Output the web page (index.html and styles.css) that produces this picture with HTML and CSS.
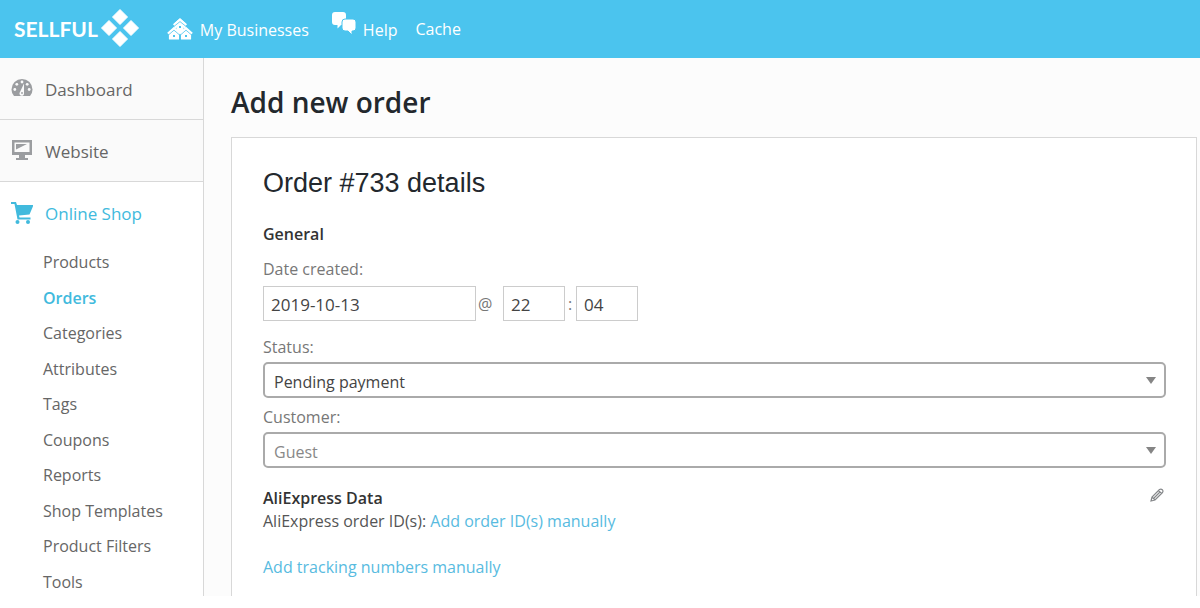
FILE: index.html
```html
<!DOCTYPE html>
<html lang="en">
<head>
<meta charset="utf-8">
<meta name="viewport" content="width=device-width, initial-scale=1">
<title>Add new order</title>
<link rel="stylesheet" href="styles.css">
</head>
<body>
<div class="page">
  <header class="topbar">
    <a class="brand" href="#">
      <span>SELLFUL</span>
      <svg class="brand-mark" viewBox="0 0 40 40" aria-hidden="true"><path d="M20 1.500 27.500 9 20 16.500 12.500 9ZM31 12.500 38.500 20 31 27.500 23.500 20ZM20 23.500 27.500 31 20 38.500 12.500 31ZM9 12.500 16.500 20 9 27.500 1.500 20Z" fill="#fff" stroke="#fff" stroke-linejoin="round"/></svg>
    </a>
    <nav class="topnav" aria-label="Account">
      <a class="businesses" href="#">
        <svg width="26" height="22" viewBox="0 0 26 22" aria-hidden="true">
          <g fill="#fff" stroke="#fff" stroke-width="1.200" stroke-linejoin="round">
            <path d="M8 5.500 13 1l5 4.500V10l-5-3.500L8 10Z"/>
            <path d="M2.500 15.500 7 11.500l4.500 4V21h-9ZM14.500 15.500l4.500-4 4.500 4V21h-9Z"/>
            <path d="M10 9.500 13 7l3 2.500V12l-3 2.500L10 12Z"/>
          </g>
          <path d="M6.500 6.800 13 1.300l6.500 5.500M.8 15.500 7 10l6 5.300 6-5.300 6.200 5.500" fill="none" stroke="#fff" stroke-width="1.700"/>
          <path d="M7.500 8 13 3.600 18.500 8M2 16.500 7 12.200l5 4.300M14 16.500l5-4.300 5 4.300" fill="none" stroke="#4bc4ee" stroke-width=".8"/>
          <path d="M12 8h2v2h-2ZM6 17h2v2H6ZM18 17h2v2h-2ZM12.600 17h.8v5h-.8Z" fill="#4bc4ee"/>
        </svg>
        <span>My Businesses</span>
      </a>
      <a class="help" href="#">
        <svg width="26" height="25" viewBox="0 0 26 25" aria-hidden="true">
          <path d="M4 1h8q3 0 3 3v7q0 3-3 3H10l-3.500 3.500V14H4Q1 14 1 11V4Q1 1 4 1Z" fill="#fff"/>
          <path d="M14 8h8q3 0 3 3v6q0 3-3 3h-1v4l-4-4h-3q-3 0-3-3v-6q0-3 3-3Z" fill="#fff" stroke="#4bc4ee"/>
        </svg>
        <span>Help</span>
      </a>
      <a class="cache" href="#">Cache</a>
    </nav>
  </header>
  <div class="body">
    <nav class="sidebar" aria-label="Main">
      <a class="section" href="#">
        <svg width="22" height="22" viewBox="0 0 22 22" aria-hidden="true">
          <path d="M3 18Q.5 15 .5 11.500a10.500 10.500 0 0 1 21 0Q21.500 15 19 18Z" fill="#9b9da0"/>
          <g fill="#fafafa"><circle cx="11" cy="4" r="1.400"/><circle cx="5.800" cy="6.300" r="1.400"/><circle cx="16.200" cy="6.300" r="1.400"/><circle cx="3.800" cy="11.500" r="1.400"/><circle cx="18.200" cy="11.500" r="1.400"/><path d="M13 5.500 9 14a2.300 2.300 0 1 0 4 1Z"/></g>
          <circle cx="11" cy="15" r=".9" fill="#9b9da0"/>
        </svg>
        <span>Dashboard</span>
      </a>
      <a class="section" href="#">
        <svg width="22" height="22" viewBox="0 0 22 22" aria-hidden="true">
          <path d="M1 0h20v15h-7v3h3v2H5v-2h3v-3H1ZM3.500 2.500v9.500h15V2.500Z" fill="#9b9da0" fill-rule="evenodd"/>
          <path d="M5 4h11L5 9.500Z" fill="#9b9da0"/>
        </svg>
        <span>Website</span>
      </a>
      <a class="section section-open" href="#">
        <svg width="22" height="22" viewBox="0 0 22 22" aria-hidden="true">
          <path d="M0 0h5l1 3h16.500l-4 9.500-10.500 1 .5 2h11v2H6.500L3.500 2H0Z" fill="#41badd"/>
          <circle cx="6.500" cy="20" r="2" fill="#41badd"/><circle cx="17" cy="20" r="2" fill="#41badd"/>
        </svg>
        <span>Online Shop</span>
      </a>
      <ul class="submenu">
        <li><a href="#">Products</a></li>
        <li><a class="current" href="#" aria-current="page">Orders</a></li>
        <li><a href="#">Categories</a></li>
        <li><a href="#">Attributes</a></li>
        <li><a href="#">Tags</a></li>
        <li><a href="#">Coupons</a></li>
        <li><a href="#">Reports</a></li>
        <li><a href="#">Shop Templates</a></li>
        <li><a href="#">Product Filters</a></li>
        <li><a href="#">Tools</a></li>
      </ul>
    </nav>
    <main class="main">
      <h1>Add new order</h1>
      <form class="card">
        <h2>Order #733 details</h2>
        <h3>General</h3>
        <label class="label" for="date">Date created:</label>
        <div class="date-row">
          <input class="date" id="date" type="text" value="2019-10-13">
          <span class="at">@</span>
          <input class="time" type="text" value="22" aria-label="Hour">
          <span class="colon">:</span>
          <input class="time" type="text" value="04" aria-label="Minute">
        </div>
        <label class="label" for="status">Status:</label>
        <div class="select">
          <select id="status"><option>Pending payment</option></select>
          <svg width="10" height="7" viewBox="0 0 10 7" aria-hidden="true"><path d="M0 0h10L5 7Z" fill="#858585"/></svg>
        </div>
        <label class="label customer-label" for="customer">Customer:</label>
        <div class="select">
          <select class="muted" id="customer"><option>Guest</option></select>
          <svg width="10" height="7" viewBox="0 0 10 7" aria-hidden="true"><path d="M0 0h10L5 7Z" fill="#858585"/></svg>
        </div>
        <div class="data-head">
          <h3>AliExpress Data</h3>
          <button class="edit" type="button" aria-label="Edit">
            <svg width="14" height="14" viewBox="0 0 14 14" aria-hidden="true"><path d="M1 13 2 9 9.500 1.500Q11 .5 12.300 1.700 13.500 3 12.500 4.500L5 12ZM2 9l3 3M8.500 2.500l3 3M4 10l6-6" fill="none" stroke="#85878a" stroke-width="1.200"/></svg>
          </button>
        </div>
        <p>AliExpress order ID(s): <a href="#">Add order ID(s) manually</a></p>
        <p class="tracking"><a href="#">Add tracking numbers manually</a></p>
      </form>
    </main>
  </div>
</div>
</body>
</html>
```
FILE: styles.css
```css
* { box-sizing: border-box; }
body {
  margin: 0;
  background: #fff;
  color: #555;
  font: 16px/24px "Open Sans", "Noto Sans", sans-serif;
}
a { color: #58bbdf; text-decoration: none; }
svg { display: block; flex: none; }
h1, h2, h3, p, ul { margin: 0; padding: 0; }
.page {
  display: flex;
  flex-direction: column;
  min-height: 100vh;
  padding-bottom: 12px;
}
.topbar {
  display: flex;
  height: 58px;
  padding-left: 14px;
  background: #4bc4ee;
}
.topbar a { color: #fff; }
.brand {
  display: flex;
  align-items: center;
  gap: 2px;
  font: bold 21px/24px Lato, sans-serif;
}
.brand-mark { width: 40px; height: 40px; margin-bottom: 2px; }
.topnav { display: flex; align-items: flex-start; margin-left: 27px; }
.topnav a { display: flex; }
.businesses { gap: 7px; padding-top: 18px; }
.help { gap: 6px; padding-top: 11px; margin-left: 22px; }
.help span { padding-top: 7px; }
.cache { padding-top: 17px; margin-left: 18px; }
.body { display: flex; flex: 1; }
.sidebar {
  display: flex;
  flex: 0 0 204px;
  flex-direction: column;
  border-right: 1px solid #d8d8d8;
}
.section {
  display: flex;
  align-items: center;
  gap: 12px;
  height: 62px;
  padding: 0 11px;
  border-bottom: 1px solid #d8d8d8;
  background: #fafafa;
  color: #666;
  font-size: 17px;
}
.section span { padding-top: 2px; }
.section-open { height: 62px; border: 0; background: #fff; color: #41badd; }
.submenu {
  display: flex;
  flex: 1;
  flex-direction: column;
  justify-content: space-between;
  padding: 6px 0 2px 43px;
  list-style: none;
}
.submenu a { color: #666; }
.submenu .current { color: #41badd; font-weight: 600; }
.main {
  display: flex;
  flex: 1;
  flex-direction: column;
  min-width: 0;
  padding: 24px 3px 0 27px;
  background: #fcfcfc;
}
h1 { color: #23282d; font-size: 28px; font-weight: 600; line-height: 40px; }
.card {
  flex: 1;
  margin-top: 15px;
  padding: 29px 30px 0 31px;
  border: 1px solid #d8d8d8;
  border-bottom: 0;
  background: #fff;
}
h2 { color: #23282d; font: 27px/32px "Liberation Sans", Arial, sans-serif; }
h3 { color: #333; font-size: 16px; font-weight: 600; }
h2 + h3 { margin-top: 23px; }
.label { display: block; margin-top: 11px; color: #777; }
.date-row { display: flex; align-items: center; margin-top: 5px; color: #777; }
input, select { background: #fff; color: #444; font: inherit; }
input { height: 35px; padding: 2px 7px 0; border: 1px solid #ccc; border-radius: 0; font-size: 17px; }
.date { width: 213px; }
.time { width: 62px; }
.at { width: 27px; padding-left: 2px; }
.colon { width: 11px; padding-left: 3px; }
.date-row + .label { margin-top: 14px; }
.select { display: grid; align-items: center; margin-top: 3px; }
.select > * { grid-area: 1 / 1; }
.select svg { justify-self: end; margin-right: 10px; pointer-events: none; }
select {
  width: 100%;
  height: 36px;
  padding: 3px 26px 0 9px;
  border: 2px solid #aaa;
  border-radius: 5px;
  appearance: none;
}
.muted { color: #888; }
.customer-label { margin-top: 7px; }
.data-head { display: flex; justify-content: space-between; margin-top: 18px; }
.data-head + p { margin-top: -1px; }
.edit { align-self: flex-start; padding: 2px; border: 0; background: none; }
.tracking { margin-top: 22px; }
```
